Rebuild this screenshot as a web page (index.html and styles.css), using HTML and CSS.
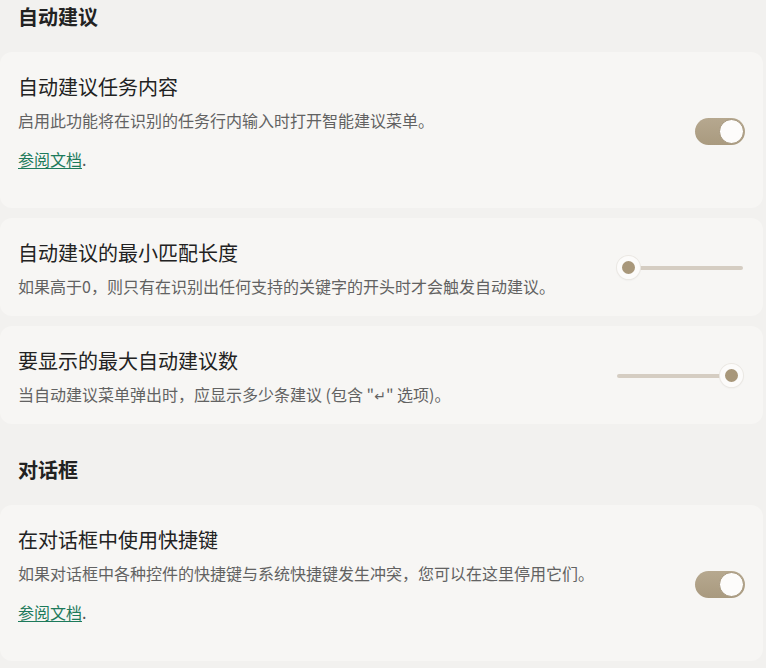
FILE: index.html
```html
<!DOCTYPE html>
<html>
<head>
<meta charset="utf-8" />
<title>设置 - 自动建议</title>
<link rel="stylesheet" href="styles.css">
</head>
<body>
<div class="page">

<h2 class="section-title">自动建议</h2>

<div class="setting">
  <div class="setting-info">
    <div class="setting-name">自动建议任务内容</div>
    <div class="setting-desc">启用此功能将在识别的任务行内输入时打开智能建议菜单。</div>
    <div class="setting-link"><a href="#">参阅文档</a>.</div>
  </div>
  <div class="setting-control">
    <div class="toggle on"><span class="knob"></span></div>
  </div>
</div>

<div class="setting">
  <div class="setting-info">
    <div class="setting-name">自动建议的最小匹配长度</div>
    <div class="setting-desc">如果高于0，则只有在识别出任何支持的关键字的开头时才会触发自动建议。</div>
  </div>
  <div class="setting-control">
    <div class="slider"><div class="track"></div><span class="thumb" style="--v: 0"></span></div>
  </div>
</div>

<div class="setting">
  <div class="setting-info">
    <div class="setting-name">要显示的最大自动建议数</div>
    <div class="setting-desc">当自动建议菜单弹出时，应显示多少条建议 (包含 "<span class="key">↵</span>" 选项)。</div>
  </div>
  <div class="setting-control">
    <div class="slider"><div class="track"></div><span class="thumb" style="--v: 1"></span></div>
  </div>
</div>

<h2 class="section-title">对话框</h2>

<div class="setting">
  <div class="setting-info">
    <div class="setting-name">在对话框中使用快捷键</div>
    <div class="setting-desc">如果对话框中各种控件的快捷键与系统快捷键发生冲突，您可以在这里停用它们。</div>
    <div class="setting-link"><a href="#">参阅文档</a>.</div>
  </div>
  <div class="setting-control">
    <div class="toggle on"><span class="knob"></span></div>
  </div>
</div>

</div>
</body>
</html>
```

FILE: styles.css
```css
* {
  box-sizing: border-box;
  margin: 0;
  padding: 0;
}
html, body {
  background-color: #f2f1ef;
  font-family: 'Noto Sans CJK SC', 'Noto Sans', sans-serif;
  color: #222;
}
.page {
  padding: 2px 3px 0 0;
}
.section-title {
  font-size: 20px;
  font-weight: 700;
  line-height: 30px;
  margin: 0 0 20px;
  padding-left: 18px;
}
.setting + .section-title {
  margin-top: 31px;
}
.setting {
  align-items: center;
  background-color: #f7f6f4;
  border-radius: 12px;
  display: flex;
  justify-content: space-between;
  margin-bottom: 10px;
  padding: 20px 18px 18px;
}
.setting-name {
  font-size: 20px;
  line-height: 30px;
  color: #222;
}
.setting-desc {
  color: #626262;
  font-size: 16px;
  height: 24px;
  line-height: 24px;
  margin-top: 6px;
}
.setting-desc > .key {
  font-family: 'DejaVu Sans', sans-serif;
  font-size: 14px;
  line-height: 1;
}
.setting-link {
  color: #555;
  font-size: 16px;
  line-height: 24px;
  margin: 15px 0 19px;
}
.setting-link a {
  color: #1d7a5b;
  text-decoration: underline;
  text-underline-offset: 2px;
}
.setting-control {
  flex: none;
}
.toggle {
  background: linear-gradient(#b6a88f, #a99a7f);
  border-radius: 14px;
  height: 27px;
  position: relative;
  width: 50px;
}
.toggle > .knob {
  background-color: #fdfcfb;
  border: 1.5px solid #a3947a;
  border-radius: 50%;
  height: 25px;
  position: absolute;
  right: 1px;
  top: 1px;
  width: 25px;
}
.slider {
  align-items: center;
  display: flex;
  height: 24px;
  margin-right: 2px;
  position: relative;
  width: 126px;
}
.slider > .track {
  background-color: #d5cdc2;
  border-radius: 2px;
  height: 4px;
  width: 100%;
}
.slider > .thumb {
  background-color: #a8977a;
  border: 5px solid #fcfbfa;
  border-radius: 50%;
  box-shadow: 0 0 0 1px #ebe8e3, 0 1px 2px rgba(0,0,0,.08);
  height: 23px;
  left: calc((100% - 23px) * var(--v));
  position: absolute;
  top: 0;
  width: 23px;
}
```
